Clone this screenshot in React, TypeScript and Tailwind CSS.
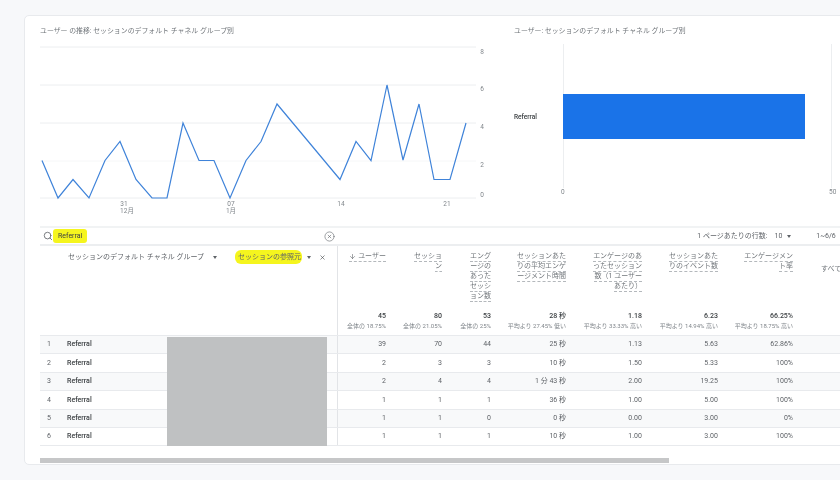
import { ArrowDown, CircleX, Search, X } from "lucide-react";

const linePoints = "2,116.5 18,154 33,135.5 49,154 65,116.5 80,97.5 96,135.5 112,154 127,154 143,79 159,116.5 174,116.5 190,154 206,116.5 221,97.5 237,60 300,135.5 316,97.5 331,116.5 347,41 363,116 379,60 394,135.5 410,135.5 426,79";

const columns = [
  { w: "w-[48px]", head: ["ユーザー"], arrow: true, total: "45", sub: "全体の 18.75%" },
  { w: "w-[56px]", head: ["セッショ", "ン"], total: "80", sub: "全体の 21.05%" },
  { w: "w-[49px]", head: ["エング", "ージの", "あった", "セッシ", "ョン数"], total: "53", sub: "全体の 25%" },
  { w: "w-[75px]", head: ["セッションあた", "りの平均エンゲ", "ージメント時間"], total: "28 秒", sub: "平均より 27.45% 低い" },
  { w: "w-[76px]", head: ["エンゲージのあ", "ったセッション", "数（1 ユーザー", "あたり）"], total: "1.18", sub: "平均より 33.33% 高い" },
  { w: "w-[76px]", head: ["セッションあた", "りのイベント数"], total: "6.23", sub: "平均より 14.94% 高い" },
  { w: "w-[75px]", head: ["エンゲージメン", "ト率"], total: "66.25%", sub: "平均より 18.75% 高い" },
];

const rows = [
  ["39", "70", "44", "25 秒", "1.13", "5.63", "62.86%"],
  ["2", "3", "3", "10 秒", "1.50", "5.33", "100%"],
  ["2", "4", "4", "1 分 43 秒", "2.00", "19.25", "100%"],
  ["1", "1", "1", "36 秒", "1.00", "5.00", "100%"],
  ["1", "1", "0", "0 秒", "0.00", "3.00", "0%"],
  ["1", "1", "1", "10 秒", "1.00", "3.00", "100%"],
];

function Caret() {
  return <span className="h-0 w-0 border-x-[2.5px] border-t-[3px] border-x-transparent border-t-[#5f6368]" />;
}

function LineChart() {
  return (
    <svg width="460" height="182" className="block">
      {[3, 41, 79, 117, 154].map((y, i) => (
        <line key={y} x1="0" x2="436" y1={y} y2={y} stroke={i === 3 ? "#f6f7f8" : "#eceef0"} strokeWidth="1" />
      ))}
      <polyline points={linePoints} fill="none" stroke="#3f83d9" strokeWidth="1.2" strokeLinejoin="miter" />
      <g fill="#80868b" fontSize="6.5" textAnchor="middle">
        <text x="442" y="10">8</text>
        <text x="442" y="47">6</text>
        <text x="442" y="85">4</text>
        <text x="442" y="123">2</text>
        <text x="442" y="153">0</text>
        <text x="84" y="161.5">31</text>
        <text x="87" y="168.5">12月</text>
        <text x="191" y="161.5">07</text>
        <text x="191" y="168.5">1月</text>
        <text x="301" y="162">14</text>
        <text x="407" y="162">21</text>
      </g>
    </svg>
  );
}

function BarChart() {
  return (
    <svg width="326" height="182" className="block">
      <line x1="49.5" x2="49.5" y1="0" y2="144" stroke="#eceef0" />
      <line x1="317.5" x2="317.5" y1="0" y2="144" stroke="#eceef0" />
      <rect x="49" y="50" width="242" height="45" fill="#1a73e8" />
      <text x="0" y="75" fill="#3c4043" fontSize="6.5" fontWeight="500">Referral</text>
      <text x="47" y="150" fill="#80868b" fontSize="6.5">0</text>
      <text x="315" y="150" fill="#80868b" fontSize="6.5">50</text>
    </svg>
  );
}

export default function App() {
  return (
    <div className="h-[480px] w-[840px] overflow-hidden bg-[#f7f8fa] pl-[24px] pt-[15px] font-[Roboto,'Noto_Sans_CJK_JP',sans-serif] text-[7px] text-[#5f6368] blur-[0.35px]">
      <div className="h-[450px] w-[840px] rounded-[5px] border border-[#e8eaed] bg-white pl-[15px]">
        <div className="flex h-[210px]">
          <div className="w-[474px] shrink-0">
            <div className="mt-[9px] h-[12px] text-[6.9px] leading-[12px] text-[#70757a]">ユーザー の推移: セッションのデフォルト チャネル グループ別</div>
            <div className="mt-[7px]"><LineChart /></div>
          </div>
          <div className="w-[326px] shrink-0">
            <div className="mt-[9px] h-[12px] text-[6.9px] leading-[12px] text-[#70757a]">ユーザー: セッションのデフォルト チャネル グループ別</div>
            <div className="mt-[7px]"><BarChart /></div>
          </div>
        </div>

        <div className="flex h-[20px] items-center border-y-2 border-t-[#f1f3f4] border-b-[#eceef0]">
          <Search size={10} className="ml-[3px] text-[#5f6368]" />
          <span className="rounded-[3px] bg-[#f5f51e] px-[5px] py-[2px] leading-[10px] text-[#3c4043]">Referral</span>
          <CircleX size={11} strokeWidth={1.3} className="ml-[237px] text-[#5f6368]" />
          <span className="ml-[362px]">1 ページあたりの行数:</span>
          <span className="ml-[7px]">10</span>
          <span className="ml-[5px] flex"><Caret /></span>
          <span className="ml-[25px]">1~6/6</span>
        </div>

        <div className="flex h-[90px] border-b border-[#e8eaed]">
          <div className="flex w-[298px] shrink-0 items-start border-r border-[#e2e4e7] pt-[4px]">
            <span className="ml-[28px] mt-[2px] w-[136px] whitespace-nowrap leading-[10px]">セッションのデフォルト チャネル グループ</span>
            <span className="ml-[9px] mt-[6px] flex"><Caret /></span>
            <span className="ml-[18px] whitespace-nowrap rounded-[6px] bg-[#f5f51e] py-[2px] pl-[3px] pr-[1px] leading-[10px]">セッションの参照元</span>
            <span className="ml-[5px] mt-[6px] flex"><Caret /></span>
            <X size={7} strokeWidth={2} className="ml-[8px] mt-[3.5px] text-[#3c4043]" />
          </div>
          {columns.map((c) => (
            <div key={c.total} className={`${c.w} flex shrink-0 flex-col justify-between pb-[4px] pt-[5.5px] text-right`}>
              <div className="flex flex-col items-end leading-[10px]">
                {c.head.map((line, i) => (
                  <span key={line} className="flex h-[10px] items-center border-b border-dashed border-[#b4b8bc] text-[#70757a]">
                    {c.arrow && i === 0 ? <ArrowDown size={7} className="mr-[2px] text-[#5f6368]" /> : null}
                    {line}
                  </span>
                ))}
              </div>
              <div className="whitespace-nowrap">
                <div className="font-medium leading-[10px] text-[#3c4043]">{c.total}</div>
                <div className="flex justify-end text-[6px] leading-[10px] text-[#80868b]">{c.sub}</div>
              </div>
            </div>
          ))}
          <div className="whitespace-nowrap pl-[28px] pt-[18px] text-[#70757a]">すべて</div>
        </div>

        <div className="relative">
          {rows.map((r, i) => (
            <div key={i} className={`flex h-[18.4px] items-center border-b border-[#e8eaed] last:border-b-0 ${i % 2 === 0 ? "bg-[#f8f9fa]" : "bg-white"}`}>
              <div className="flex h-full w-[298px] shrink-0 items-center border-r border-[#e2e4e7]">
                <span className="w-[27px] pl-[7px]">{i + 1}</span>
                <span className="font-medium text-[#3c4043]">Referral</span>
              </div>
              {r.map((v, j) => (
                <div key={j} className={`${columns[j].w} shrink-0 text-right`}>{v}</div>
              ))}
            </div>
          ))}
          <div className="absolute left-[127px] top-[1px] h-[109px] w-[160px] bg-[#bfc1c2]" />
        </div>

        <div className="mt-[12px] h-[5px] w-[629px] bg-[#c6c7c8]" />
      </div>
    </div>
  );
}
